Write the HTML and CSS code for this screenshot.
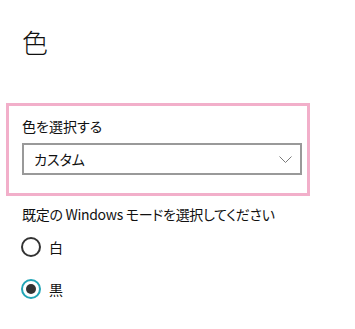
FILE: index.html
```html
<!DOCTYPE html>
<html lang="ja">
<head>
    <meta charset="UTF-8">
    <meta name="viewport" content="width=device-width, initial-scale=1.0">
    <title>色</title>
    <link rel="stylesheet" href="styles.css">
</head>
<body>
    <div class="page">
        <h1 class="title">色</h1>

        <div class="picker">
            <div class="picker-label">色を選択する</div>
            <div class="select">
                <span>カスタム</span>
                <svg class="chevron" width="13" height="7" viewBox="0 0 13 7">
                    <polyline points="0.5,0.5 6.5,6.5 12.5,0.5" fill="none" stroke="#7a7a7a" stroke-width="1"/>
                </svg>
            </div>
        </div>

        <div class="mode-label">既定の Windows モードを選択してください</div>

        <div class="radio-list">
            <div class="radio-item">
                <span class="radio"></span>
                <span>白</span>
            </div>
            <div class="radio-item">
                <span class="radio checked"></span>
                <span>黒</span>
            </div>
        </div>
    </div>
</body>
</html>
```

FILE: styles.css
```css
* { margin: 0; padding: 0; box-sizing: border-box; }

body {
    font-family: "Noto Sans CJK JP", "Noto Sans", sans-serif;
    font-feature-settings: "palt";
    background: #fff;
    color: #111;
    font-size: 14px;
}

.page {
    display: flex;
    flex-direction: column;
    align-items: flex-start;
}

.title {
    font-size: 26px;
    font-weight: 300;
    line-height: 36px;
    margin: 24px 0 0 22px;
}

.picker {
    margin: 43px 0 0 6px;
    width: 304px;
    border: 3px solid #f2afca;
    padding: 10px 0 18px 13px;
}

.picker-label {
    line-height: 20px;
}

.select {
    margin-top: 7px;
    width: 280px;
    height: 32px;
    border: 2px solid #999;
    display: flex;
    align-items: center;
    justify-content: space-between;
    padding: 0 8px 0 10px;
}

.mode-label {
    margin: 8px 0 0 22px;
    line-height: 20px;
    letter-spacing: -0.3px;
}

.radio-list {
    margin: 13px 0 0 21px;
    display: flex;
    flex-direction: column;
    gap: 22px;
}

.radio-item {
    display: flex;
    align-items: center;
    gap: 8px;
    height: 20px;
}

.radio {
    width: 20px;
    height: 20px;
    border: 2px solid #333;
    border-radius: 50%;
    display: flex;
    align-items: center;
    justify-content: center;
}

.radio.checked { border-color: #21a5b6; }

.radio.checked::after {
    content: "";
    width: 10px;
    height: 10px;
    border-radius: 50%;
    background: #333;
}
```
